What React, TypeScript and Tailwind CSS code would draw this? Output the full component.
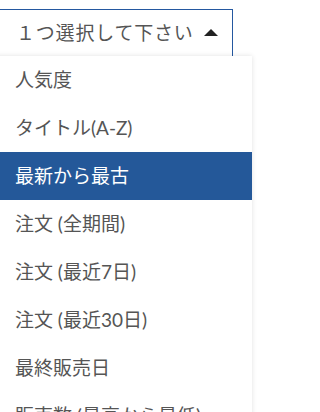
import React from "react";

const options = [
  "人気度",
  "タイトル(A-Z)",
  "最新から最古",
  "注文 (全期間)",
  "注文 (最近7日)",
  "注文 (最近30日)",
  "最終販売日",
  "販売数 (最高から最低)",
  "販売数 (最低から最高)",
];

const selected = "最新から最古";

export default function App() {
  return (
    <div
      className="h-screen overflow-hidden bg-white pt-[9px]"
      style={{ fontFamily: "Lato, 'Noto Sans CJK JP', sans-serif" }}
    >
      {/* Select trigger */}
      <div className="ml-[-10px] flex h-[48px] w-[243px] items-center justify-between border border-[#2458a0] pl-[25px] pr-[14px] text-[19px] text-[#555]">
        <span className="tracking-[0.8px]">１つ選択して下さい</span>
        <svg width="14" height="7" viewBox="0 0 14 7" className="mt-[-1px]">
          <path d="M0 7 L7 0 L14 7 Z" fill="#222" />
        </svg>
      </div>

      {/* Options */}
      <ul className="relative ml-[-10px] mt-[-1px] w-[262px] bg-white shadow-[0_0_5px_rgba(0,0,0,0.12)]">
        {options.map((o) => (
          <li
            key={o}
            className={
              o === selected
                ? "flex h-[48px] items-center bg-[#245899] pl-[25px] text-[19px] text-white"
                : "flex h-[48px] items-center pl-[25px] text-[19px] text-[#555]"
            }
          >
            {o}
          </li>
        ))}
      </ul>
    </div>
  );
}
